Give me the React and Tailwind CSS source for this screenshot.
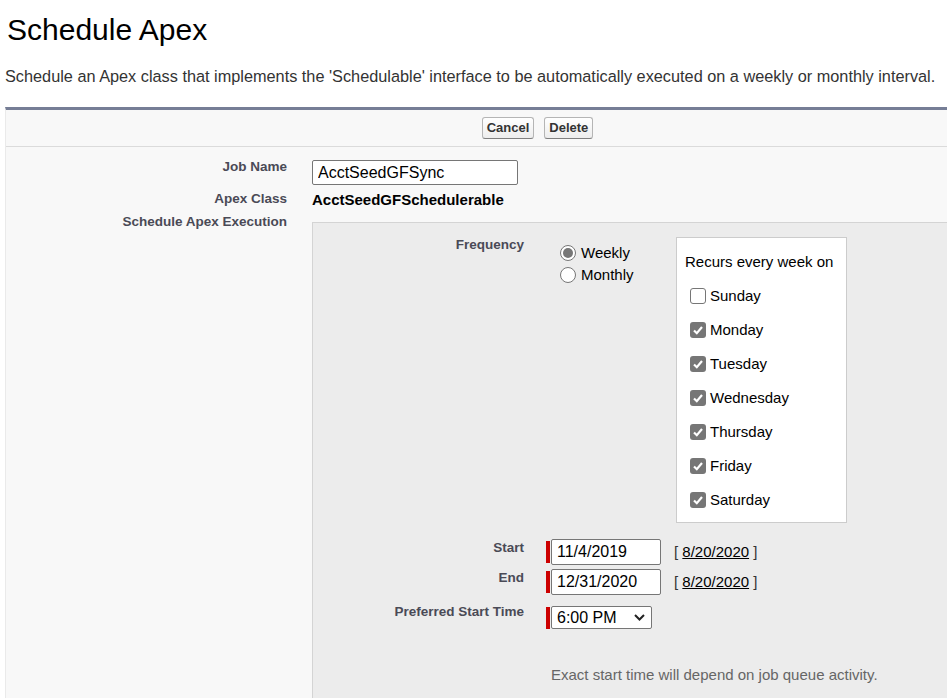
import React from "react";

const days = [
  { name: "Sunday", checked: false },
  { name: "Monday", checked: true },
  { name: "Tuesday", checked: true },
  { name: "Wednesday", checked: true },
  { name: "Thursday", checked: true },
  { name: "Friday", checked: true },
  { name: "Saturday", checked: true },
];

const Checkbox = ({ checked }) =>
  checked ? (
    <span className="flex h-[16px] w-[16px] items-center justify-center rounded-[3px] bg-[#767676]">
      <svg width="12" height="12" viewBox="0 0 12 12">
        <path d="M2 6.5 L4.8 9.2 L10 3" fill="none" stroke="#fff" strokeWidth="2.2" />
      </svg>
    </span>
  ) : (
    <span className="h-[16px] w-[16px] rounded-[3px] border border-[#767676] bg-white" />
  );

const Radio = ({ checked }) => (
  <span className="flex h-[16px] w-[16px] items-center justify-center rounded-full border border-[#767676] bg-white">
    {checked && <span className="h-[10px] w-[10px] rounded-full bg-[#767676]" />}
  </span>
);

const RequiredBar = () => <span className="mr-[1px] h-[22px] w-[4px] bg-[#c00]" />;

const App = () => {
  return (
    <div className="h-[698px] w-[947px] overflow-hidden bg-white font-['Liberation_Sans',Arial,sans-serif] text-black">
      <h1 className="pl-[7px] pt-[15px] text-[30px] font-normal leading-[30px]">Schedule Apex</h1>
      <p className="mt-[21px] whitespace-nowrap pl-[5px] text-[16.3px] leading-[20px] text-[#333]">
        Schedule an Apex class that implements the 'Schedulable' interface to be automatically executed on a weekly or monthly interval.
      </p>

      {/* Page block */}
      <div className="ml-[5px] mt-[21px] w-[1064px] border-l border-t-[3px] border-l-[#eaeaea] border-t-[#767e96] bg-[#f8f8f8]">
        <div className="flex h-[37px] items-center justify-center gap-[10px] border-b border-[#dbdbdb]">
          <button className="h-[22px] rounded-[3px] border border-[#b5b5b5] border-b-[#7f7f7f] bg-gradient-to-b from-white to-[#ededed] px-[4px] text-[13px] font-bold leading-[18px] text-[#333]">
            Cancel
          </button>
          <button className="h-[22px] rounded-[3px] border border-[#b5b5b5] border-b-[#7f7f7f] bg-gradient-to-b from-white to-[#ededed] px-[4px] text-[13px] font-bold leading-[18px] text-[#333]">
            Delete
          </button>
        </div>

        <div className="pt-[12px]">
          {/* Job Name */}
          <div className="flex items-start">
            <div className="w-[294px] pr-[13px] text-right text-[13.5px] font-bold leading-[16px] text-[#4a4a56]">Job Name</div>
            <div className="ml-[12px] pt-[1px]">
              <input
                readOnly
                defaultValue="AcctSeedGFSync"
                className="h-[25px] w-[206px] rounded-[2px] border border-[#767676] bg-white px-[5px] text-[16px] outline-none"
              />
            </div>
          </div>

          {/* Apex Class */}
          <div className="mt-[6px] flex items-start">
            <div className="w-[294px] pr-[13px] text-right text-[13.5px] font-bold leading-[16px] text-[#4a4a56]">Apex Class</div>
            <div className="ml-[12px] text-[15px] font-bold leading-[17px]">AcctSeedGFSchedulerable</div>
          </div>

          {/* Schedule Apex Execution */}
          <div className="mt-[6px] flex items-start">
            <div className="w-[294px] pr-[13px] text-right text-[13.5px] font-bold leading-[16px] text-[#4a4a56]">
              Schedule Apex Execution
            </div>
            <div className="ml-[12px] flex-1 pt-[8px]">
              <div className="border-l border-t border-[#d4d4d4] bg-[#ececec] pb-[40px] pt-[14px]">
                {/* Frequency */}
                <div className="flex items-start">
                  <div className="w-[225px] pr-[14px] text-right text-[13.5px] font-bold leading-[16px] text-[#4a4a56]">Frequency</div>
                  <div className="ml-[8px] flex">
                    <div className="w-[130px] pl-[14px] pt-[5px] text-[15px]">
                      <label className="flex h-[22px] items-center gap-[5px]">
                        <Radio checked />
                        Weekly
                      </label>
                      <label className="flex h-[22px] items-center gap-[5px]">
                        <Radio />
                        Monthly
                      </label>
                    </div>
                    <div className="h-[286px] w-[171px] border border-[#cccccc] bg-white">
                      <div className="pl-[8px] pt-[15px] text-[15px] leading-[18px]">Recurs every week on</div>
                      <ul className="mt-[8px]">
                        {days.map((day) => (
                          <li key={day.name} className="flex h-[34px] items-center gap-[4px] pl-[13px] text-[15px]">
                            <Checkbox checked={day.checked} />
                            {day.name}
                          </li>
                        ))}
                      </ul>
                    </div>
                  </div>
                </div>

                {/* Start */}
                <div className="mt-[16px] flex items-start">
                  <div className="w-[225px] pr-[14px] pt-[1px] text-right text-[13.5px] font-bold leading-[16px] text-[#4a4a56]">Start</div>
                  <div className="ml-[8px] flex items-center">
                    <RequiredBar />
                    <input
                      readOnly
                      defaultValue="11/4/2019"
                      className="h-[26px] w-[110px] rounded-[2px] border border-[#767676] bg-white px-[5px] text-[16px] outline-none"
                    />
                    <span className="ml-[13px] text-[15px] text-[#333]">
                      [ <span className="text-black underline">8/20/2020</span> ]
                    </span>
                  </div>
                </div>

                {/* End */}
                <div className="mt-[4px] flex items-start">
                  <div className="w-[225px] pr-[14px] pt-[1px] text-right text-[13.5px] font-bold leading-[16px] text-[#4a4a56]">End</div>
                  <div className="ml-[8px] flex items-center">
                    <RequiredBar />
                    <input
                      readOnly
                      defaultValue="12/31/2020"
                      className="h-[26px] w-[110px] rounded-[2px] border border-[#767676] bg-white px-[5px] text-[16px] outline-none"
                    />
                    <span className="ml-[13px] text-[15px] text-[#333]">
                      [ <span className="text-black underline">8/20/2020</span> ]
                    </span>
                  </div>
                </div>

                {/* Preferred Start Time */}
                <div className="mt-[11px] flex items-start">
                  <div className="-mt-[2px] w-[225px] pr-[14px] text-right text-[13.5px] font-bold leading-[16px] text-[#4a4a56]">
                    Preferred Start Time
                  </div>
                  <div className="ml-[8px] flex items-center">
                    <RequiredBar />
                    <div className="flex h-[23px] w-[101px] items-center rounded-[2px] border border-[#767676] bg-white pl-[5px] text-[16px]">
                      6:00 PM
                      <svg className="ml-auto mr-[6px]" width="11" height="7" viewBox="0 0 11 7">
                        <polyline points="1,1 5.5,5.5 10,1" fill="none" stroke="#222" strokeWidth="2" />
                      </svg>
                    </div>
                  </div>
                </div>

                <div className="ml-[238px] mt-[37px] text-[15px] leading-[18px] text-[#666]">
                  Exact start time will depend on job queue activity.
                </div>
              </div>
            </div>
          </div>
        </div>
      </div>
    </div>
  );
};

export default App;
